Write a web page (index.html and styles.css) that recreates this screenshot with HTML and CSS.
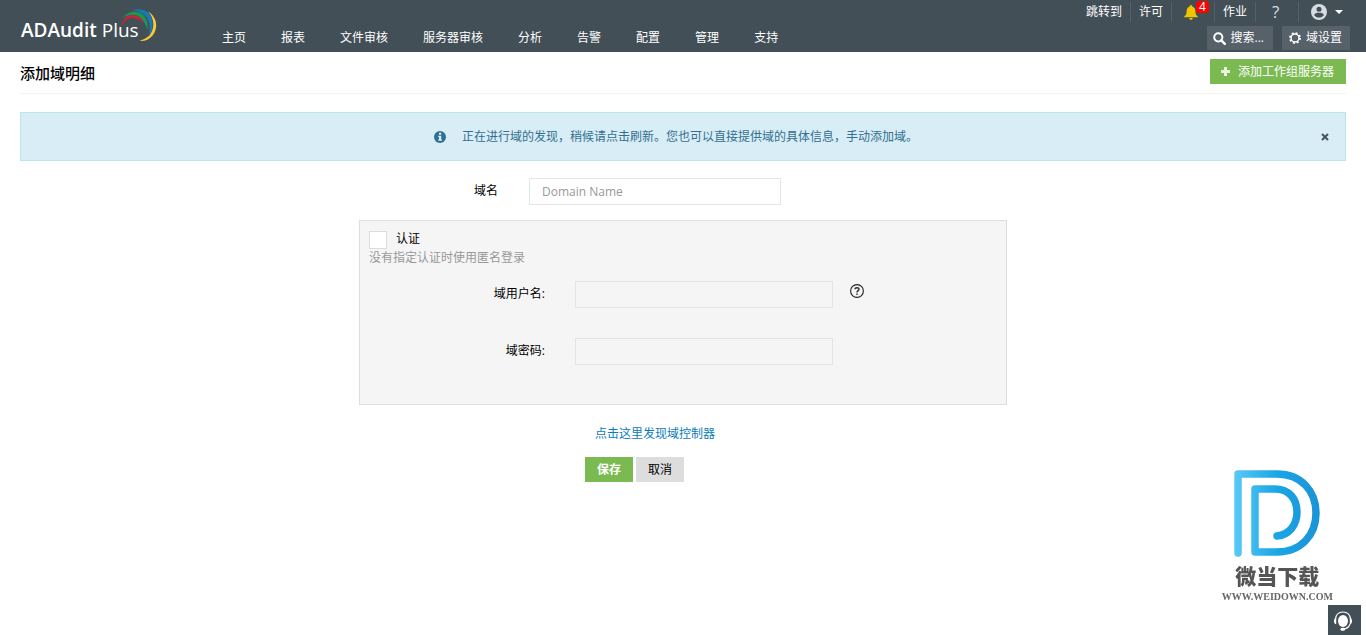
FILE: index.html
```html
<!DOCTYPE html>
<html lang="zh-CN">
<head>
<meta charset="utf-8">
<meta name="viewport" content="width=device-width, initial-scale=1">
<title>ADAudit Plus</title>
<link rel="stylesheet" href="styles.css">
</head>
<body>
<header class="topbar">
  <a class="brand" href="#"><span class="brand-name"><b>ADAudit</b> Plus</span>
    <svg class="brand-arcs" viewBox="0 0 36 34" width="36" height="34" aria-hidden="true">
      <path fill="#f9c92d" d="M26 3.500C35 9 36.500 19 31 27C27 32 22 34 17.500 32.500C26 31 31 25 31.300 17C31.400 12 29.500 7 26 3.500Z"/>
      <path fill="#1878b8" d="M10 2C17 0 25 1.500 28.500 7.500C32 14 31 23 26.500 29C28.500 21 28 14 24.500 9C21 5 16 2.500 10 2Z"/>
      <path fill="#159a52" d="M1.500 9.500C6 3 15 2.500 20 6C25 10 26.500 16 25.500 22C23.500 15 20 10 15 7.500C11 6 6 6.500 1.500 9.500Z"/>
      <path fill="#cf2038" d="M0 18C0 11 5 7 11 7C17 7.500 20.500 11 22.500 16C18 12 14 9.800 10 9.800C6 9.800 2 13 0 18Z"/>
    </svg>
  </a>
  <nav class="main-nav">
    <a href="#">主页</a><a href="#">报表</a><a href="#">文件审核</a><a href="#">服务器审核</a><a href="#">分析</a><a href="#">告警</a><a href="#">配置</a><a href="#">管理</a><a href="#">支持</a>
  </nav>
  <div class="tools">
    <div class="quick-links">
      <a href="#">跳转到</a>
      <a href="#">许可</a>
      <a class="alerts" href="#" aria-label="告警通知">
        <svg viewBox="0 0 14 15" width="14" height="15" aria-hidden="true"><path fill="#f0c400" d="M7 0C8 0 8.300 .8 8.300 1.600C10.500 2.300 11.400 4 11.400 6.500C11.400 9 12.200 10.300 13.800 11.600V12.300H.2V11.600C1.800 10.300 2.600 9 2.600 6.500C2.600 4 3.500 2.300 5.700 1.600C5.700 .8 6 0 7 0ZM5.200 13H8.800C8.600 14.300 8 14.800 7 14.800S5.400 14.300 5.200 13Z"/></svg>
        <span class="badge">4</span>
      </a>
      <a href="#">作业</a>
      <a class="help-link" href="#">?</a>
      <a class="account" href="#" aria-label="账户">
        <svg viewBox="0 0 16 16" width="16" height="16" aria-hidden="true"><circle cx="8" cy="8" r="8" fill="#d5dce2"/><circle cx="8" cy="5.200" r="2.500" fill="#434f57"/><path fill="#434f57" d="M3.200 11.200C3.500 8.900 5.500 8.700 8 8.700S12.500 8.900 12.800 11.200C11.500 12.800 10 13.500 8 13.500S4.500 12.800 3.200 11.200Z"/></svg>
        <span class="caret"></span>
      </a>
    </div>
    <div class="actions">
      <button class="tool-btn search" type="button">
        <svg viewBox="0 0 13 13" width="13" height="13" aria-hidden="true"><circle cx="5.300" cy="5.300" r="4.100" fill="none" stroke="#fff" stroke-width="2"/><path d="M8.300 8.300L11.800 11.800" stroke="#fff" stroke-width="2.400" stroke-linecap="round"/></svg>搜索...</button>
      <button class="tool-btn" type="button">
        <svg viewBox="0 0 13 13" width="12" height="12" aria-hidden="true"><circle cx="6.500" cy="6.500" r="5.500" fill="none" stroke="#fff" stroke-width="1.800" stroke-dasharray="2.160 2.160"/><circle cx="6.500" cy="6.500" r="4.300" fill="none" stroke="#fff" stroke-width="1.600"/></svg>域设置</button>
    </div>
  </div>
</header>

<main class="page">
  <div class="page-head">
    <h1>添加域明细</h1>
    <button class="add-btn" type="button">
      <svg viewBox="0 0 9 9" width="9" height="9" aria-hidden="true"><path fill="#e7f3df" d="M3 0H6V3H9V6H6V9H3V6H0V3H3Z"/></svg>添加工作组服务器</button>
  </div>

  <div class="notice">
    <p class="notice-text">
      <svg viewBox="0 0 12 12" width="12" height="12" aria-hidden="true"><circle cx="6" cy="6" r="6" fill="#2f7193"/><path fill="#d9edf7" d="M5 1.800H7.200V3.700H5ZM4.200 4.700H7.200V8.500H8V9.700H4.200V8.500H5V5.900H4.200Z"/></svg>
      <span>正在进行域的发现，稍候请点击刷新。您也可以直接提供域的具体信息，手动添加域。</span></p>
    <button class="close-btn" type="button" aria-label="关闭"><svg viewBox="0 0 8 8" width="8" height="8" aria-hidden="true"><path d="M1 1L7 7M7 1L1 7" stroke="#46545c" stroke-width="2"/></svg></button>
  </div>

  <form class="domain-form">
    <div class="domain-row">
      <label for="domain">域名</label>
      <input class="field" id="domain" type="text" placeholder="Domain Name">
    </div>
    <fieldset class="auth">
      <label class="auth-toggle"><input class="check" type="checkbox">认证</label>
      <p class="hint">没有指定认证时使用匿名登录</p>
      <div class="cred-row">
        <label for="user">域用户名:</label>
        <input class="field" id="user" type="text" disabled>
        <svg class="tip" viewBox="0 0 14 14" width="14" height="14" aria-hidden="true"><circle cx="7" cy="7" r="6.400" fill="none" stroke="#222" stroke-width="1.100"/><path d="M5 5.300C5 3.200 9 3.200 9 5.300C9 6.600 7 6.700 7 8.400M7 9.600V11" fill="none" stroke="#333" stroke-width="1.400"/></svg>
      </div>
      <div class="cred-row">
        <label for="pass">域密码:</label>
        <input class="field" id="pass" type="password" disabled>
      </div>
    </fieldset>
    <div class="form-foot">
      <a class="discover" href="#">点击这里发现域控制器</a>
      <div class="buttons">
        <button class="btn save" type="button">保存</button>
        <button class="btn" type="button">取消</button>
      </div>
    </div>
  </form>
</main>

<div class="watermark">
  <svg viewBox="0 0 88 88" width="88" height="88" aria-hidden="true">
    <defs><linearGradient id="blue" gradientUnits="userSpaceOnUse" x1="0" y1="0" x2="88" y2="0"><stop offset="0" stop-color="#5bcaf5"/><stop offset=".5" stop-color="#1aa6e6"/><stop offset="1" stop-color="#1b92d5"/></linearGradient></defs>
    <g fill="none" stroke="url(#blue)" stroke-width="7.500" stroke-linecap="round" stroke-linejoin="round">
      <path d="M5 84V5H44C68 5 83 22 83 44S68 83 44 83H22V20H42C56 20 64 30 64 43S56 66 44 67"/>
    </g>
  </svg>
  <strong class="wm-name">微当下载</strong>
  <span class="wm-url">WWW.WEIDOWN.COM</span>
</div>
<button class="chat" type="button" aria-label="在线支持">
  <svg viewBox="0 0 20 20" width="20" height="20" aria-hidden="true"><ellipse cx="10" cy="10" rx="5" ry="6" fill="#fff"/><path d="M2.500 8C3 3.500 6 1 10 1S17 3.500 17.500 8M17 13C16 16 14 17.800 10 18" fill="none" stroke="#fff" stroke-width="1.200"/><path d="M3.200 6.700V13.200C.2 13 .2 7 3.200 6.700ZM16.800 6.700V13.200C19.800 13 19.800 7 16.800 6.700Z" fill="#fff"/><rect x="7.500" y="16.700" width="4.500" height="3" rx="1.500" fill="#fff"/></svg>
</button>
</body>
</html>
```

FILE: styles.css
```css
* { box-sizing: border-box; }

body {
  margin: 0;
  min-height: 100vh;
  background: #fff;
  color: #000;
  font: 12px/16px "Open Sans", "Noto Sans CJK SC", sans-serif;
}

a { color: inherit; text-decoration: none; }
h1, p { margin: 0; }
button, input { font: inherit; color: inherit; }
button { border: 0; padding: 0; cursor: pointer; }
svg { flex: none; display: block; }

.topbar {
  display: flex;
  height: 52px;
  padding: 0 16px 0 21px;
  background: #434f57;
  color: #fff;
}

.brand { position: relative; width: 201px; padding-top: 18px; }
.brand-name { font-size: 19px; line-height: 24px; }
.brand-name b { font-weight: 600; }
.brand-arcs { position: absolute; left: 101px; top: 8px; }

.main-nav { display: flex; gap: 35px; padding-top: 30px; white-space: nowrap; }

.tools { margin-left: auto; }
.quick-links { display: flex; height: 26px; padding-top: 2px; justify-content: flex-end; }
.quick-links a {
  display: flex;
  align-items: center;
  height: 20px;
  padding: 0 8px;
  border-left: 1px solid #53606a;
}
.quick-links a:first-child { border-left: 0; }
.quick-links .alerts { position: relative; width: 43px; padding-left: 12px; }
.badge {
  position: absolute;
  top: -1px;
  left: 24px;
  width: 13px;
  height: 12px;
  border-radius: 3px;
  background: #f00;
  font-size: 12px;
  line-height: 12px;
  text-align: center;
}
.quick-links .help-link { width: 43px; padding-left: 16px; font-size: 17px; color: #d5dce2; }
.quick-links .account { gap: 8px; padding: 0 7px 0 12px; }
.caret { border: 4px solid transparent; border-top-color: #fff; border-bottom: 0; }

.actions { display: flex; justify-content: flex-end; gap: 9px; }
.tool-btn {
  display: flex;
  align-items: center;
  gap: 5px;
  height: 24px;
  padding: 0 8px 0 7px;
  background: #56616a;
}
.search { padding: 0 9px 0 6px; }

.page { padding: 0 20px; }
.page-head {
  display: flex;
  align-items: center;
  justify-content: space-between;
  height: 42px;
  padding-bottom: 2px;
  border-bottom: 1px solid #f3f3f3;
}
h1 { font-size: 15px; line-height: 20px; font-weight: 500; padding-top: 2px; }
.add-btn {
  display: flex;
  align-items: center;
  gap: 8px;
  height: 25px;
  padding: 0 12px 0 11px;
  background: #7aba50;
  color: #fff;
}

.notice {
  display: flex;
  align-items: center;
  height: 49px;
  margin-top: 18px;
  padding: 0 16px;
  border: 1px solid #b8e7ef;
  background: #d9edf6;
  color: #31708f;
}
.notice-text { display: flex; flex: 1; align-items: center; justify-content: center; gap: 16px; padding-right: 6px; }
.close-btn { padding: 1px 0 0; background: none; }

.domain-form { max-width: 648px; margin: 17px auto 0; }
.domain-row { display: flex; align-items: center; gap: 31px; padding-left: 115px; }
.field { height: 27px; padding: 0 12px; border: 1px solid #e2e6e6; border-radius: 0; background: #fff; }
.field:disabled { background: #f5f5f5; border-color: #e0e5e5; }
.field::placeholder { color: #999; opacity: 1; }
.domain-row .field { width: 252px; }

.domain-row label,
.cred-row label { padding-bottom: 2px; }

.auth {
  margin: 15px 0 0;
  padding: 8px 9px 39px;
  border: 1px solid #ddd;
  background: #f5f5f5;
}
.auth-toggle { display: flex; align-items: center; gap: 9px; height: 19px; }
.check { appearance: none; width: 18px; height: 18px; margin: 2px 0 0; border: 1px solid #ddd; background: #fff; }
.hint { margin-top: 2px; color: #999; }
.cred-row { display: grid; grid-template-columns: 176px 258px 14px; column-gap: 30px; margin-top: 15px; align-items: center; }
.cred-row + .cred-row { margin-top: 30px; }
.cred-row label { text-align: right; }
.tip { margin: 0 0 7px -13px; }

.form-foot { display: flex; flex-direction: column; align-items: flex-start; gap: 15px; margin-top: 21px; padding-left: 226px; }
.discover { padding-left: 10px; color: #0a7cbd; }
.buttons { display: flex; gap: 3px; }
.btn { width: 48px; height: 25px; background: #ddd; }
.save { background: #7aba50; color: #fff; font-weight: 700; }

.watermark {
  position: fixed;
  right: 33px;
  bottom: 30px;
  display: flex;
  flex-direction: column;
  align-items: center;
}
.wm-name { margin-top: 6px; color: #555; font-size: 21px; line-height: 26px; font-weight: 900; }
.wm-url { color: #666; font: 700 10px/16px "Liberation Serif", serif; }

.chat {
  position: fixed;
  right: 5px;
  bottom: 0;
  display: grid;
  place-items: center;
  width: 33px;
  height: 30px;
  padding: 2px 3px 0 0;
  background: #434f57;
}
```
